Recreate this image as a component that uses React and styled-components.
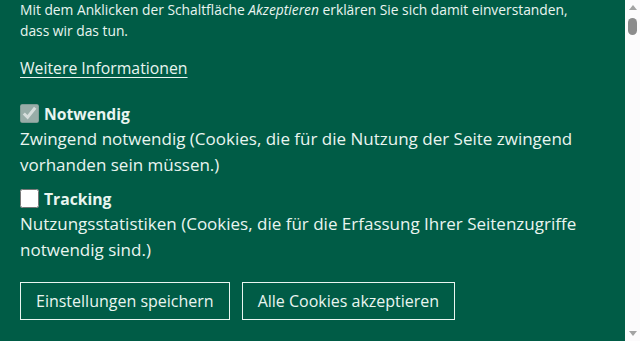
import styled, { createGlobalStyle } from "styled-components";

const GlobalStyle = createGlobalStyle`
  html, body {
    margin: 0;
    padding: 0;
  }
  body {
    background: #005c46;
    font-family: "Open Sans", "Liberation Sans", sans-serif;
    color: #e9f5f0;
  }
`;

const Page = styled.div`
  display: flex;
  height: 100vh;
  overflow: hidden;
`;

const Banner = styled.main`
  flex: 1;
  min-width: 0;
  padding: 0 36px 0 20px;
  background: #005c46;
`;

const Intro = styled.p`
  margin: -1.5px 0 0;
  font-size: 13.8px;
  line-height: 21px;
  em {
    font-style: italic;
  }
`;

const InfoLink = styled.a`
  display: inline-block;
  margin-top: 15px;
  font-size: 15.8px;
  line-height: 24px;
  color: inherit;
  text-decoration: underline;
  text-underline-offset: 3px;
`;

const Option = styled.div`
  margin-top: ${(p) => p.$gap}px;
`;

const OptionLabel = styled.label`
  display: flex;
  align-items: center;
  gap: 5px;
  font-size: 15.7px;
  line-height: 24px;
  font-weight: 700;
`;

const Box = styled.input`
  width: 19px;
  height: 19px;
  margin: 0;
`;

const OptionText = styled.p`
  margin: 0;
  font-size: 17px;
  line-height: 26px;
`;

const Actions = styled.div`
  display: flex;
  gap: 12px;
  margin-top: 19px;
`;

const Button = styled.button`
  height: 38px;
  padding: 0 15px;
  background: transparent;
  border: 1px solid #e9f5f0;
  border-radius: 0;
  color: #e9f5f0;
  font-family: inherit;
  font-size: 16px;
  cursor: pointer;
`;

const Scrollbar = styled.div`
  flex: 0 0 15px;
  display: flex;
  flex-direction: column;
  background: #fcfbfc;
`;

const ArrowButton = styled.div`
  height: 15px;
  display: flex;
  align-items: center;
  justify-content: center;

  &::before {
    content: "";
    border-left: 4.5px solid transparent;
    border-right: 4.5px solid transparent;
    ${(p) =>
      p.$down
        ? "border-top: 5px solid #a3a3a3;"
        : "border-bottom: 5px solid #a3a3a3;"}
  }
`;

const Track = styled.div`
  flex: 1;
  padding: 3px 3px 0;
`;

const Thumb = styled.div`
  height: 17px;
  border-radius: 5px;
  background: #8c8c8c;
`;

export default function App() {
  return (
    <>
      <GlobalStyle />
      <Page>
        <Banner>
          <Intro>
            Mit dem Anklicken der Schaltfläche <em>Akzeptieren</em> erklären Sie
            sich damit einverstanden, dass wir das tun.
          </Intro>
          <InfoLink href="#">Weitere Informationen</InfoLink>
          <Option $gap={22}>
            <OptionLabel>
              <Box type="checkbox" checked disabled readOnly />
              Notwendig
            </OptionLabel>
            <OptionText>
              Zwingend notwendig (Cookies, die für die Nutzung der Seite zwingend
              vorhanden sein müssen.)
            </OptionText>
          </Option>
          <Option $gap={9}>
            <OptionLabel>
              <Box type="checkbox" />
              Tracking
            </OptionLabel>
            <OptionText>
              Nutzungsstatistiken (Cookies, die für die Erfassung Ihrer
              Seitenzugriffe notwendig sind.)
            </OptionText>
          </Option>
          <Actions>
            <Button>Einstellungen speichern</Button>
            <Button>Alle Cookies akzeptieren</Button>
          </Actions>
        </Banner>
        <Scrollbar aria-hidden="true">
          <ArrowButton />
          <Track>
            <Thumb />
          </Track>
          <ArrowButton $down />
        </Scrollbar>
      </Page>
    </>
  );
}
